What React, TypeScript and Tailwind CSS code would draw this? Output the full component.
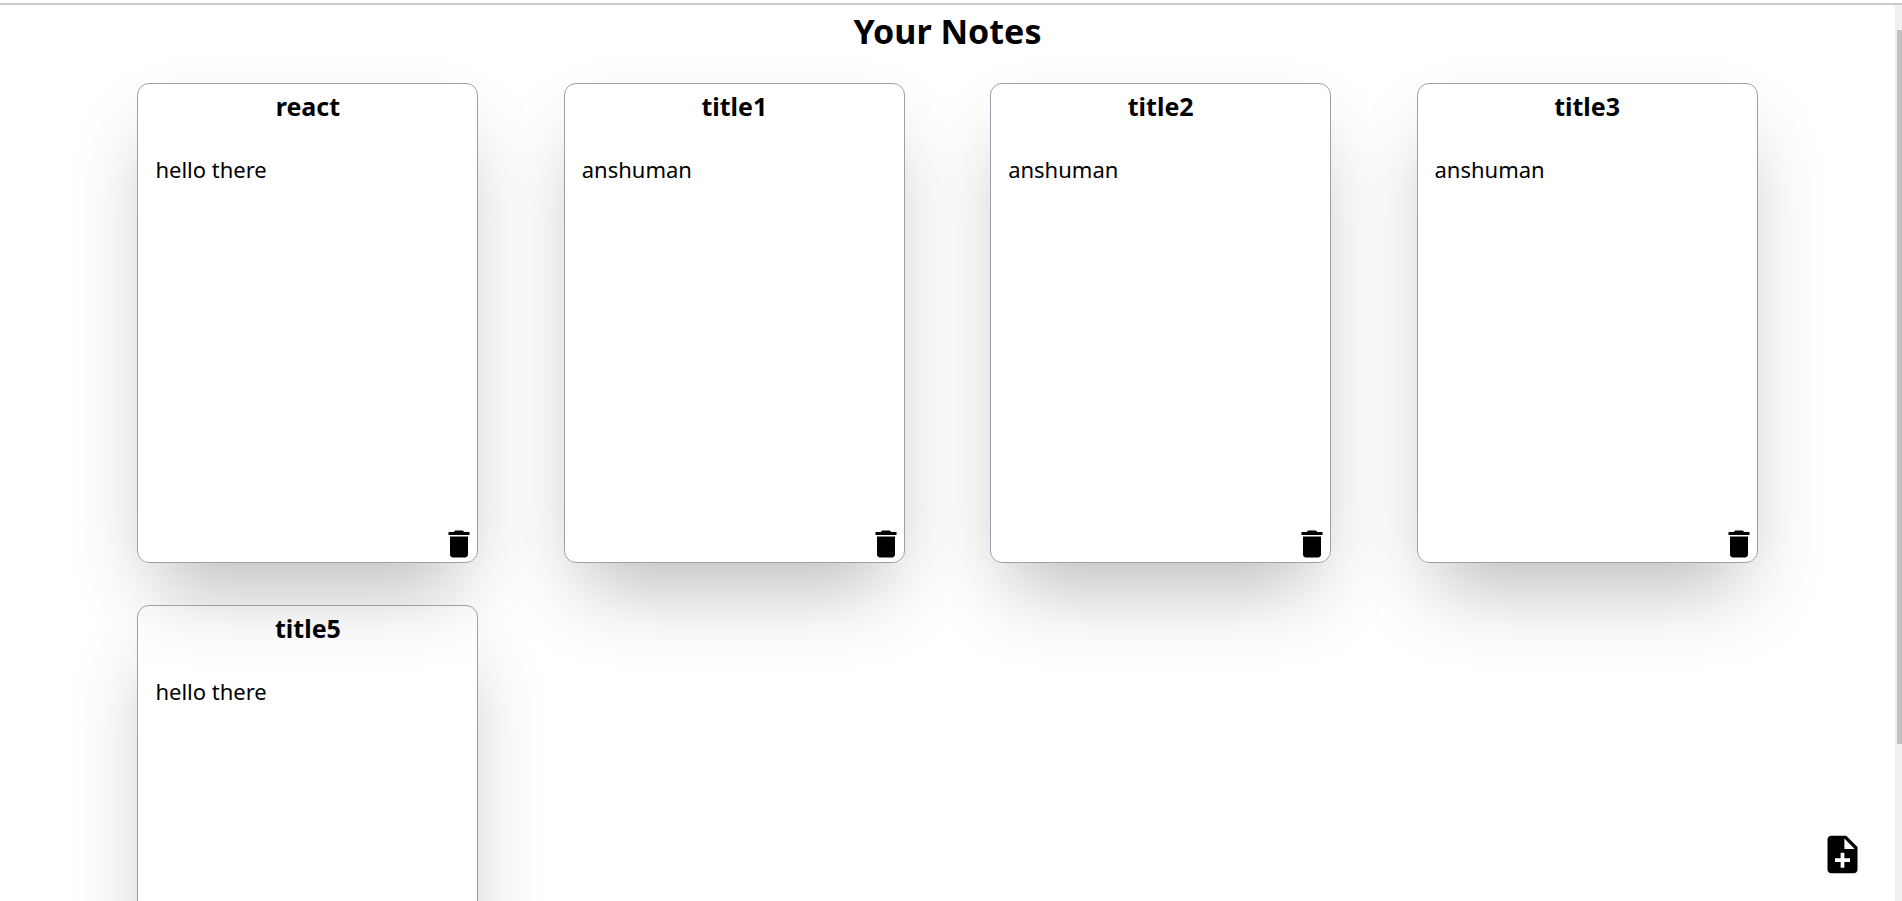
import { MdDelete, MdNoteAdd } from "react-icons/md";

type Note = { title: string; body: string };

const notes: Note[] = [
  { title: "react", body: "hello there" },
  { title: "title1", body: "anshuman" },
  { title: "title2", body: "anshuman" },
  { title: "title3", body: "anshuman" },
  { title: "title5", body: "hello there" },
];

function NoteCard({ title, body }: Note) {
  return (
    <article className="flex h-[480px] w-4/5 flex-col rounded-xl border border-gray-400 shadow-[0_40px_76px_-18px_rgba(0,0,0,0.28)]">
      <h2 className="pt-1 text-center text-[25px] leading-9 font-bold">{title}</h2>
      <p className="flex-1 px-[17px] pt-[27px] text-[22px] leading-9">{body}</p>
      <button type="button" aria-label={`Delete ${title}`} className="self-end">
        <MdDelete size={36} />
      </button>
    </article>
  );
}

export default function App() {
  return (
    <div className="flex h-screen flex-col bg-white pt-[3px] font-['Noto_Sans',sans-serif] text-black">
      <div className="h-0.5 shrink-0 bg-[#cbcbcb]" />
      <div className="flex min-h-0 flex-1">
        <main className="min-w-0 flex-1 overflow-hidden">
          <h1 className="pt-1.5 text-center text-[34px] leading-10 font-bold">Your Notes</h1>
          <div className="mx-auto mt-8 grid w-[90%] grid-cols-4 justify-items-center gap-y-[42px]">
            {notes.map((note) => (
              <NoteCard key={note.title} {...note} />
            ))}
          </div>
        </main>
        <div className="flex w-[7px] flex-col bg-[#f0f0f0] pt-[25px] pl-0.5">
          <div className="h-[82%] bg-[#c1c1c1]" />
        </div>
      </div>
      <button type="button" aria-label="Add note" className="fixed right-[37px] bottom-6">
        <MdNoteAdd size={45} />
      </button>
    </div>
  );
}
